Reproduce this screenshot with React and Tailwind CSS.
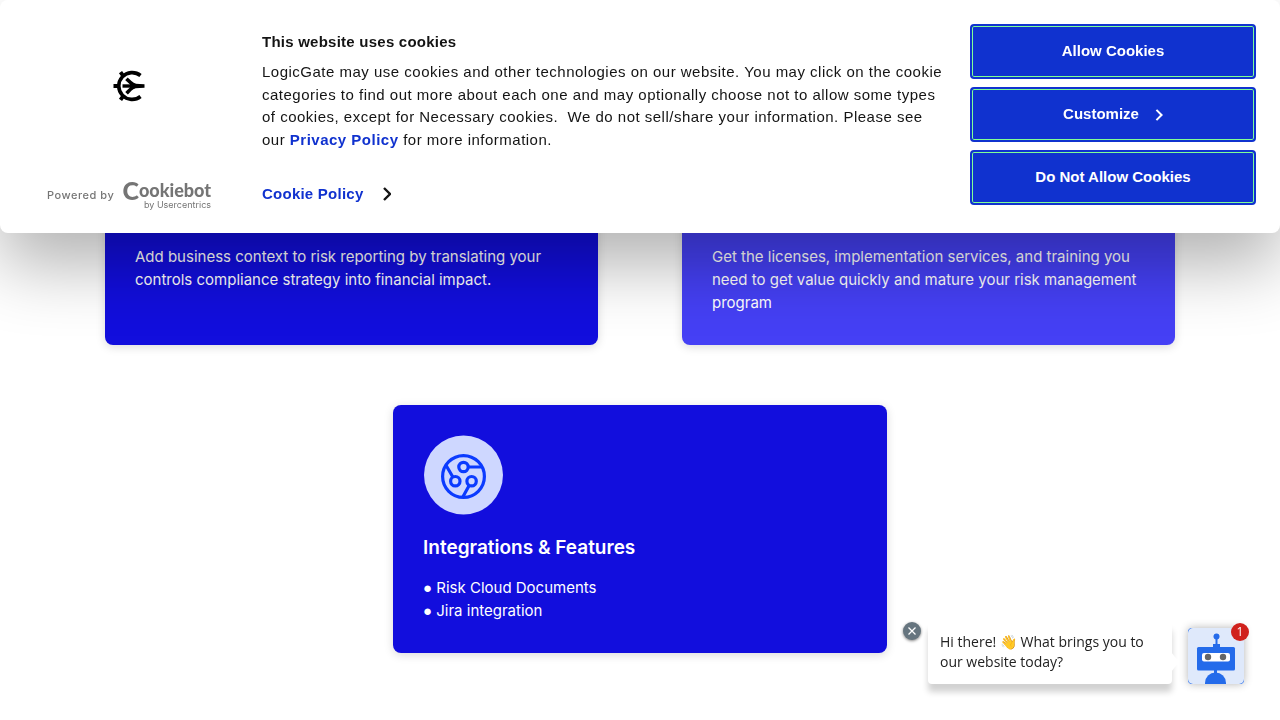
import React from "react";

const cardBase =
  "rounded-lg px-[30px] font-['Inter',sans-serif] text-[15px] leading-[23px] text-white shadow-[0_2px_10px_rgba(0,0,0,0.15)]";

const actionBase =
  "flex h-[55px] w-full items-center justify-center gap-4 rounded border-2 border-[#1032cf] bg-[#1032cf] text-[15px] font-bold text-white shadow-[inset_0_0_0_1px_#80ff95]";

function GateLogo() {
  return (
    <svg viewBox="0 0 32 32" className="h-8 w-8" fill="none" stroke="#000" aria-hidden="true">
      <path d="M27.500 5.500A13.400 13.400 0 1 0 27.500 26.500" strokeWidth="3.600" />
      <path d="M0.500 16H5M7.500 2.200l2.500 3.500M7.500 29.800l2.500-3.500" strokeWidth="3.800" />
      <path d="M9.500 16h9" strokeWidth="3.400" />
      <path d="M13.500 8.800c4 4 6.500 7.200 10.500 7.200-4 0-6.500 3.200-10.500 7.200" strokeWidth="3.600" />
      <path d="M17 12Q21 14.200 31.500 14.200v3.600Q21 17.800 17 20z" fill="#000" stroke="none" />
    </svg>
  );
}

function NetworkIcon() {
  return (
    <svg viewBox="0 0 80 80" className="h-20 w-20" fill="none" aria-hidden="true">
      <circle cx="40.500" cy="40" r="39.500" fill="#ced7ff" />
      <g stroke="#0b3bff" strokeWidth="3.200">
        <circle cx="40.500" cy="41.500" r="20.900" />
        <circle cx="40.500" cy="32" r="4.700" />
        <circle cx="32.300" cy="46.200" r="4.700" />
        <circle cx="48.600" cy="46.200" r="4.700" />
        <path d="M45.200 32H59M30 42.200L23 30.200M46.300 50.300L39.800 62" />
      </g>
    </svg>
  );
}

function Robot() {
  return (
    <svg viewBox="0 0 56 56" className="h-14 w-14 rounded bg-[#246bea]" aria-hidden="true">
      <rect width="56" height="56" rx="5" fill="#dfe9fb" />
      <g fill="#246bea">
        <circle cx="28.500" cy="8.500" r="3" />
        <path d="M27.500 9h2v7h2.500v3h-7v-3h2.500z" />
        <rect x="9" y="19" width="38" height="23.500" rx="1.500" />
        <rect x="26" y="42" width="3" height="4" />
        <circle cx="27.500" cy="55" r="10.500" />
      </g>
      <rect x="14" y="25" width="28" height="8.500" rx="2" fill="#fff" />
      <circle cx="20" cy="29" r="3.200" fill="#666" />
      <circle cx="35" cy="29" r="3.200" fill="#666" />
    </svg>
  );
}

function Chevron({ className }) {
  return (
    <svg viewBox="0 0 8 14" className={className} fill="none" stroke="currentColor" strokeWidth="2.400" aria-hidden="true">
      <path d="M1 1l6 6-6 6" />
    </svg>
  );
}

function CookieBanner() {
  return (
    <div
      role="dialog"
      aria-labelledby="cookie-title"
      className="fixed inset-x-0 top-0 z-20 flex rounded-lg bg-white p-6 font-['Liberation_Sans',Arial,sans-serif] text-[15px] text-[#141414] shadow-[0_32px_68px_rgba(0,0,0,0.3)]"
    >
      <div className="flex w-[210px] shrink-0 flex-col items-center justify-between pt-[46px]">
        <GateLogo />
        <a href="#cookiebot" className="flex items-center gap-2 font-['Inter',sans-serif] text-[#757575]">
          <span className="text-[11px] leading-4 tracking-wider font-medium">Powered by</span>
          <span className="flex flex-col items-end">
            <span className="flex items-center font-['Lato',sans-serif] font-black">
              <span className="text-[25px] leading-5">C</span>
              <span className="text-[18px] leading-4">ookiebot</span>
            </span>
            <span className="text-[9px] leading-[9px]">by Usercentrics</span>
          </span>
        </a>
      </div>

      <div className="ml-7 flex min-w-0 flex-1 flex-col pr-6 pt-[7px]">
        <h2 id="cookie-title" className="font-bold leading-[22px] tracking-[0.016em]">
          This website uses cookies
        </h2>
        <p className="mt-2 leading-normal tracking-[0.033em]">
          LogicGate may use cookies and other technologies on our website. You may click on the cookie categories to
          find out more about each one and may optionally choose not to allow some types of cookies, except for
          Necessary cookies.&nbsp; We do not sell/share your information. Please see our{" "}
          <a href="#privacy" className="font-bold text-[#1032cf]">Privacy Policy</a> for more information.
        </p>
        <a href="#policy" className="mt-8 mb-1 flex items-center gap-5 self-start font-bold leading-[22px] tracking-[0.016em] text-[#1032cf]">
          Cookie Policy
          <Chevron className="h-[14px] w-2 text-[#141414]" />
        </a>
      </div>

      <div className="flex w-[286px] shrink-0 flex-col gap-2">
        <button type="button" className={actionBase}>Allow Cookies</button>
        <button type="button" className={actionBase}>
          Customize
          <Chevron className="mt-px h-3 w-2" />
        </button>
        <button type="button" className={actionBase}>Do Not Allow Cookies</button>
      </div>
    </div>
  );
}

function ChatPrompt() {
  return (
    <aside className="fixed right-9 bottom-9 z-10 flex items-start font-['Open_Sans',sans-serif]">
      <button
        type="button"
        aria-label="Close chat message"
        className="mr-[7px] flex h-[18px] w-[18px] items-center justify-center rounded-full bg-[#66757f] text-white shadow-[0_1px_3px_rgba(0,0,0,0.5)]"
      >
        <svg viewBox="0 0 8 8" className="h-2 w-2" stroke="currentColor" strokeWidth="1.300" aria-hidden="true">
          <path d="M0.500 0.500l7 7M7.500 0.500l-7 7" />
        </svg>
      </button>
      <div className="relative w-[244px] rounded bg-white px-3 pt-[10px] pb-3 text-sm leading-5 text-[#222] shadow-[0_8px_6px_rgba(0,0,0,0.18)]">
        Hi there! 👋 What brings you to our website today?
        <span className="absolute top-[30px] -right-[7px] h-5 w-2 bg-white [clip-path:polygon(0_0,100%_50%,0_100%)]" />
      </div>
      <button
        type="button"
        aria-label="Open chat"
        className="relative ml-4 self-end rounded shadow-[0_0_8px_rgba(0,0,0,0.3)]"
      >
        <Robot />
        <span className="absolute -top-[5px] -right-[5px] flex h-[18px] w-[18px] items-center justify-center rounded-full bg-[#d0211c] text-xs text-white">
          1
        </span>
      </button>
    </aside>
  );
}

function Bullet({ children }) {
  return (
    <li>
      <span className="font-['Liberation_Sans',sans-serif]">●</span> {children}
    </li>
  );
}

export default function App() {
  return (
    <div className="min-h-screen bg-white">
      <CookieBanner />
      <main className="mx-auto max-w-[1070px] pt-[74px] pb-[67px]">
        <div className="grid grid-cols-2 gap-[84px]">
          <section className={`${cardBase} bg-[#120edd] pt-[171px] pb-[31px]`}>
            <p>
              Add business context to risk reporting by translating your controls compliance strategy into financial
              impact.
            </p>
          </section>
          <section className={`${cardBase} bg-[#4540f5] pt-[171px] pb-[31px]`}>
            <p>
              Get the licenses, implementation services, and training you need to get value quickly and mature your
              risk management program
            </p>
          </section>
        </div>
        <section className={`${cardBase} mx-auto mt-[60px] max-w-[494px] bg-[#120edd] pt-[30px] pb-[31px]`}>
          <NetworkIcon />
          <h3 className="mt-[21px] text-[19px] font-semibold leading-6">Integrations &amp; Features</h3>
          <ul className="mt-4">
            <Bullet>Risk Cloud Documents</Bullet>
            <Bullet>Jira integration</Bullet>
          </ul>
        </section>
      </main>
      <ChatPrompt />
    </div>
  );
}
